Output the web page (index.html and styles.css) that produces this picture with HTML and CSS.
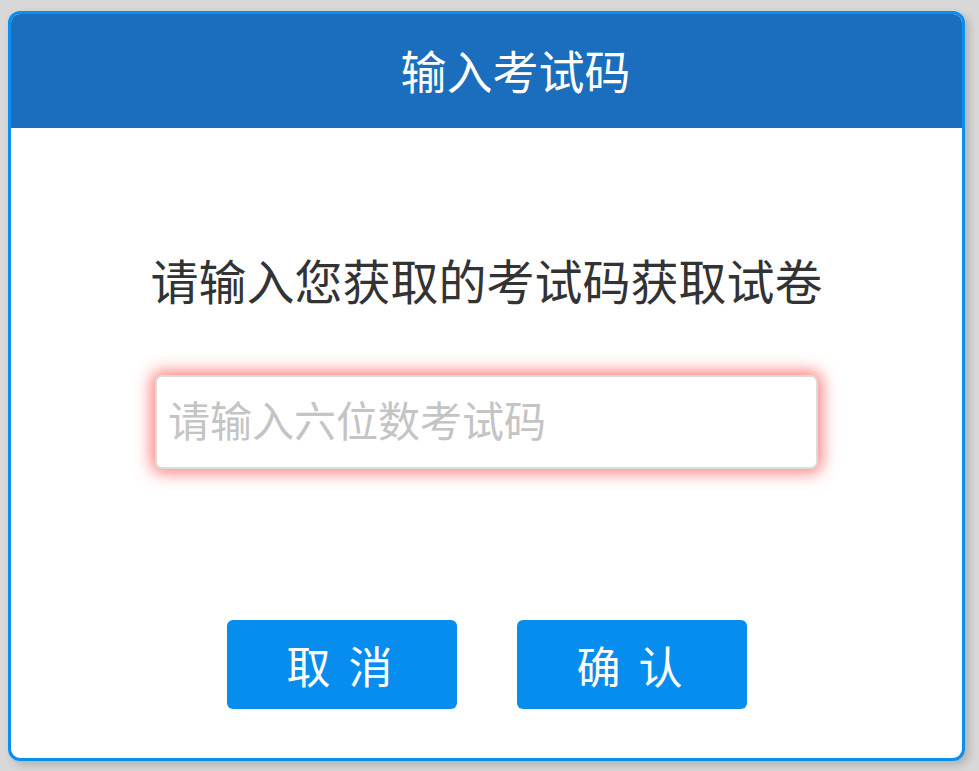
FILE: index.html
```html
<!DOCTYPE html>
<html lang="zh-CN">
<head>
<meta charset="utf-8">
<title>输入考试码</title>
<link rel="stylesheet" href="styles.css">
</head>
<body>
<div class="dialog">
  <div class="header">输入考试码</div>
  <div class="content">
    <p class="prompt">请输入您获取的考试码获取试卷</p>
    <input class="code-input" type="text" placeholder="请输入六位数考试码">
    <div class="actions">
      <button class="btn" type="button">取 消</button>
      <button class="btn" type="button">确 认</button>
    </div>
  </div>
</div>
</body>
</html>
```

FILE: styles.css
```css
html, body {
  margin: 0;
  padding: 0;
}
body {
  background: #d8d8d8;
  width: 979px;
  height: 771px;
  overflow: hidden;
  font-family: "Noto Sans CJK SC", "Noto Sans", sans-serif;
}
.dialog {
  box-sizing: border-box;
  margin: 11px 0 0 8px;
  width: 957px;
  height: 750px;
  border: 3px solid #0a8ff0;
  border-radius: 12px;
  background: #fff;
  overflow: hidden;
  box-shadow: 4px 4px 8px rgba(0, 0, 0, 0.18);
}
.header {
  height: 114px;
  box-sizing: border-box;
  line-height: 110px;
  padding-bottom: 4px;
  background: #1b6dbd;
  color: #fff;
  font-size: 46px;
  text-align: center;
  padding-left: 58px;
}
.content {
  display: flex;
  flex-direction: column;
  align-items: center;
}
.prompt {
  margin: 127px 0 0;
  font-size: 48px;
  line-height: 48px;
  color: #333;
}
.code-input {
  box-sizing: border-box;
  margin-top: 72px;
  width: 663px;
  height: 94px;
  border: 2px solid #dcdcdc;
  border-radius: 7px;
  box-shadow: 0 0 16px 4px rgba(255, 60, 60, 0.65);
  padding: 0 11px 8px;
  font-family: inherit;
  font-size: 42px;
  color: #333;
  outline: none;
}
.code-input::placeholder {
  color: #c4c4c4;
}
.actions {
  margin-top: 151px;
  display: flex;
  gap: 60px;
}
.btn {
  width: 230px;
  height: 89px;
  border: none;
  border-radius: 6px;
  background: #078ded;
  color: #fff;
  font-family: inherit;
  font-size: 44px;
  letter-spacing: 4px;
  padding: 0;
}
```
